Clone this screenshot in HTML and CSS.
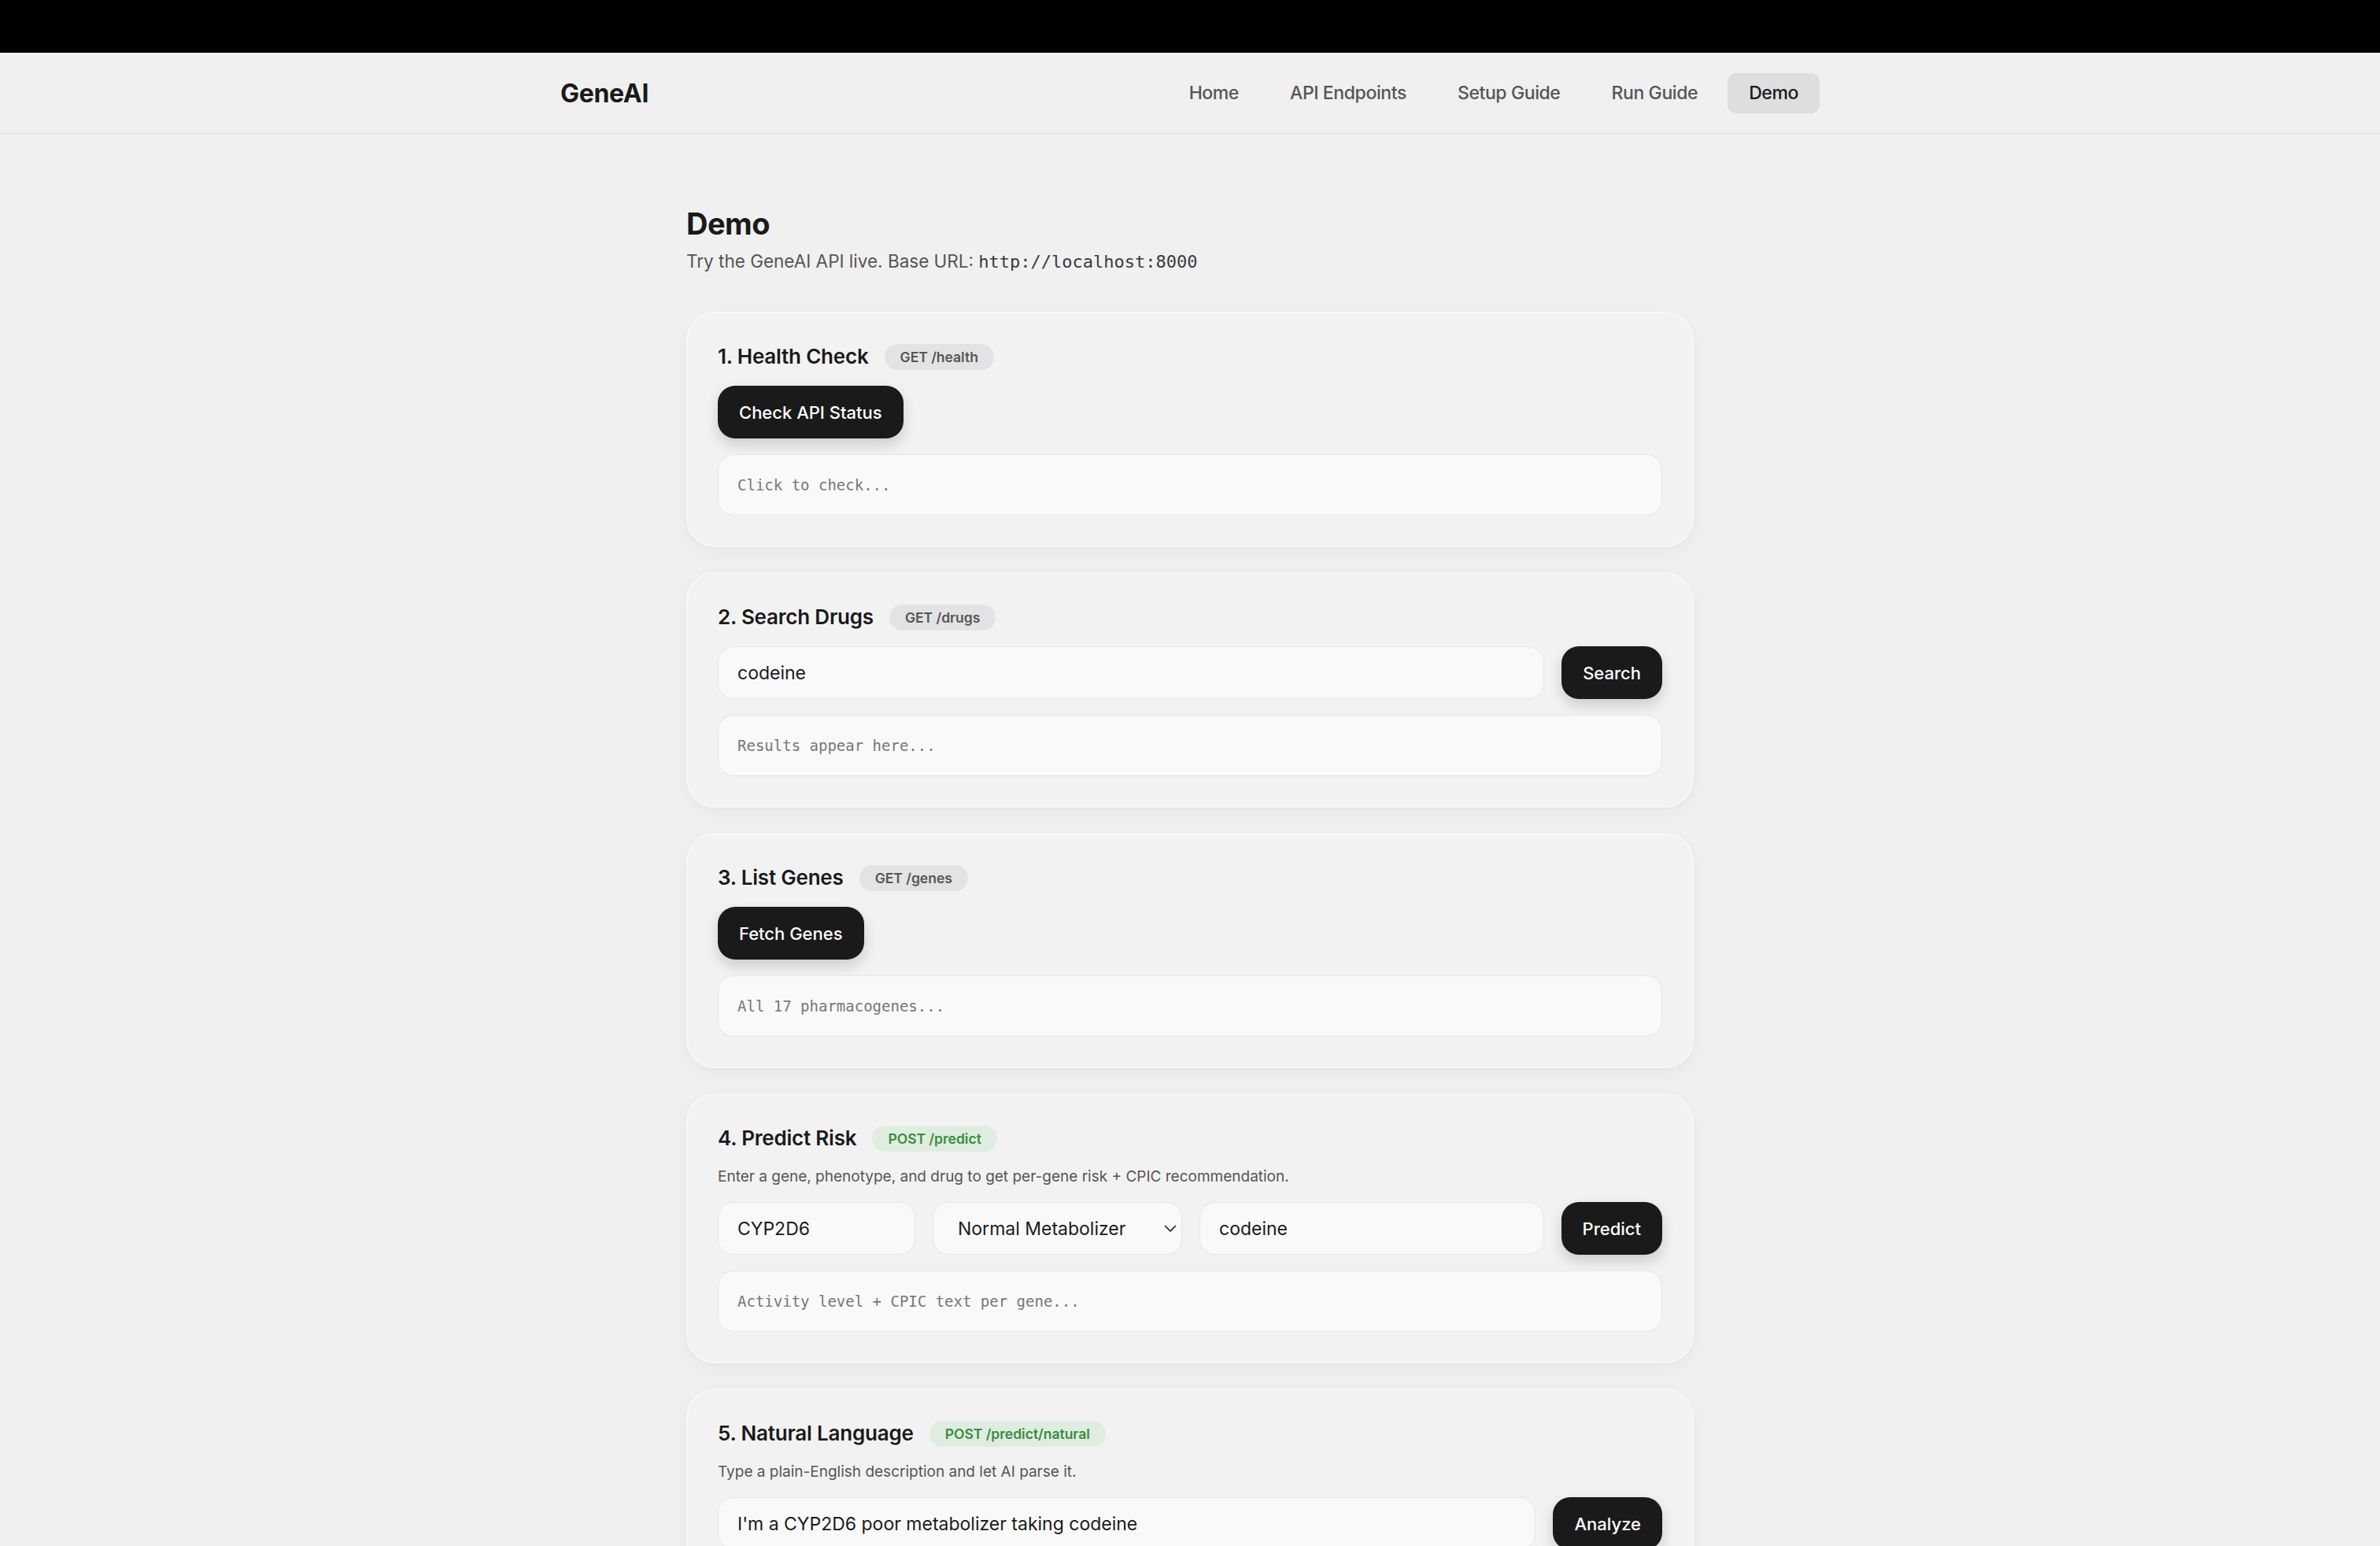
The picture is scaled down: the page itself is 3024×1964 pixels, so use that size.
FILE: index.html
```html
<!DOCTYPE html>
<html lang="en">
<head>
<meta charset="utf-8">
<title>GeneAI — Demo</title>
<link rel="stylesheet" href="styles.css">
</head>
<body>
<div class="topbar"></div>
<header class="site-header">
  <div class="header-inner">
    <a class="logo" href="#">GeneAI</a>
    <nav class="nav">
      <a class="nav-link" href="#">Home</a>
      <a class="nav-link" href="#">API Endpoints</a>
      <a class="nav-link" href="#">Setup Guide</a>
      <a class="nav-link" href="#">Run Guide</a>
      <a class="nav-link active" href="#">Demo</a>
    </nav>
  </div>
</header>
<main class="main">
  <h1 class="page-title">Demo</h1>
  <p class="page-sub">Try the GeneAI API live. Base URL: <code class="code">http://localhost:8000</code></p>

  <div class="cards">
    <section class="card">
      <div class="card-head"><h2 class="card-title">1. Health Check</h2><span class="badge">GET /health</span></div>
      <div class="row"><button class="btn">Check API Status</button></div>
      <pre class="output">Click to check...</pre>
    </section>

    <section class="card">
      <div class="card-head"><h2 class="card-title">2. Search Drugs</h2><span class="badge">GET /drugs</span></div>
      <div class="row">
        <input class="field grow" type="text" value="codeine">
        <button class="btn">Search</button>
      </div>
      <pre class="output">Results appear here...</pre>
    </section>

    <section class="card">
      <div class="card-head"><h2 class="card-title">3. List Genes</h2><span class="badge">GET /genes</span></div>
      <div class="row"><button class="btn">Fetch Genes</button></div>
      <pre class="output">All 17 pharmacogenes...</pre>
    </section>

    <section class="card">
      <div class="card-head"><h2 class="card-title">4. Predict Risk</h2><span class="badge post">POST /predict</span></div>
      <p class="card-desc">Enter a gene, phenotype, and drug to get per-gene risk + CPIC recommendation.</p>
      <div class="row">
        <input class="field gene" type="text" value="CYP2D6">
        <div class="select-wrap">
          <select class="field select">
            <option>Normal Metabolizer</option>
            <option>Poor Metabolizer</option>
            <option>Intermediate Metabolizer</option>
            <option>Ultrarapid Metabolizer</option>
          </select>
          <svg class="chevron" viewBox="0 0 16 10" width="16" height="10" aria-hidden="true"><path d="M1.5 1.5 L8 8 L14.5 1.5" fill="none" stroke="#1a1a1a" stroke-width="1.6" stroke-linecap="round" stroke-linejoin="round"/></svg>
        </div>
        <input class="field grow" type="text" value="codeine">
        <button class="btn">Predict</button>
      </div>
      <pre class="output">Activity level + CPIC text per gene...</pre>
    </section>

    <section class="card">
      <div class="card-head"><h2 class="card-title">5. Natural Language</h2><span class="badge post">POST /predict/natural</span></div>
      <p class="card-desc">Type a plain-English description and let AI parse it.</p>
      <div class="row">
        <input class="field grow" type="text" value="I'm a CYP2D6 poor metabolizer taking codeine">
        <button class="btn">Analyze</button>
      </div>
      <pre class="output">Parsed genes, phenotypes and risk...</pre>
    </section>
  </div>
</main>
</body>
</html>
```

FILE: styles.css
```css
* { box-sizing: border-box; }

html, body {
  margin: 0;
  padding: 0;
  background: #f0f0f0;
  color: #1a1a1a;
  font-family: Inter, "Noto Sans", "Liberation Sans", sans-serif;
}

.topbar {
  height: 67px;
  background: #000;
}

.site-header {
  height: 103px;
  border-bottom: 1px solid #e0e0e0;
  background: #f0f0f0;
}

.header-inner {
  max-width: 1600px;
  height: 102px;
  margin: 0 auto;
  display: flex;
  align-items: center;
  justify-content: space-between;
}

.logo {
  font-size: 32px;
  font-weight: 700;
  color: #1a1a1a;
  text-decoration: none;
  letter-spacing: -0.3px;
}

.nav {
  display: flex;
  align-items: center;
  gap: 11px;
}

.nav-link {
  display: block;
  height: 51px;
  line-height: 51px;
  padding: 0 27px;
  border-radius: 11px;
  font-size: 23px;
  font-weight: 500;
  letter-spacing: -0.4px;
  color: #555;
  text-decoration: none;
}

.nav-link.active {
  background: #dedede;
  color: #1a1a1a;
}

.main {
  width: 1280px;
  margin: 0 auto;
  padding-top: 92px;
  padding-bottom: 80px;
}

.page-title {
  margin: 0;
  font-size: 38px;
  line-height: 44px;
  font-weight: 700;
  letter-spacing: -0.5px;
}

.page-sub {
  margin: 8px 0 0;
  font-size: 22.5px;
  line-height: 36px;
  color: #555;
}

.code {
  font-family: "DejaVu Sans Mono", "Liberation Mono", monospace;
  font-size: 22px;
  color: #3a3a3a;
}

.cards {
  margin-top: 45px;
  display: flex;
  flex-direction: column;
  gap: 32px;
}

.card {
  background: #f2f2f2;
  border: 2px solid #f7f7f7;
  border-radius: 36px;
  padding: 38px;
  display: flex;
  flex-direction: column;
  gap: 20px;
  box-shadow: 0 6px 24px rgba(0, 0, 0, 0.045), 0 1px 3px rgba(0, 0, 0, 0.03);
}

.card-head {
  display: flex;
  align-items: center;
  gap: 20px;
  height: 34px;
}

.card-title {
  margin: 0;
  font-size: 26px;
  line-height: 34px;
  font-weight: 600;
  letter-spacing: -0.2px;
}

.badge {
  display: inline-block;
  height: 33px;
  line-height: 33px;
  padding: 0 20px;
  border-radius: 999px;
  background: #e3e3e3;
  color: #555;
  font-size: 17.5px;
  font-weight: 600;
}

.badge.post {
  background: #deede0;
  color: #3b8a40;
}

.card-desc {
  margin: 0;
  font-size: 19px;
  line-height: 24px;
  color: #555;
}

.row {
  display: flex;
  align-items: center;
  gap: 22px;
}

.btn {
  flex: none;
  height: 67px;
  padding: 0 27px;
  border: none;
  border-radius: 22px;
  background: #1a1a1a;
  color: #fff;
  font-family: inherit;
  font-size: 22px;
  font-weight: 500;
  box-shadow: 0 8px 18px rgba(0, 0, 0, 0.16);
  cursor: pointer;
}

.field {
  height: 67px;
  padding: 0 24px;
  border: 1px solid #e6e6e6;
  border-radius: 20px;
  background: #f9f9f9;
  color: #1a1a1a;
  font-family: inherit;
  font-size: 23px;
  outline: none;
}

.grow {
  flex: 1;
  min-width: 0;
}

.gene {
  flex: none;
  width: 251px;
}

.select-wrap {
  position: relative;
  flex: none;
  width: 317px;
}

.select {
  width: 100%;
  padding-left: 31px;
  padding-right: 40px;
  appearance: none;
  -webkit-appearance: none;
}

.chevron {
  position: absolute;
  right: 7px;
  top: 29px;
  width: 16px;
  height: 10px;
  pointer-events: none;
}

.output {
  margin: 0;
  padding: 24px 24px;
  border: 1px solid #e6e6e6;
  border-radius: 20px;
  background: #f9f9f9;
  color: #777;
  font-family: "DejaVu Sans Mono", "Liberation Mono", monospace;
  font-size: 19px;
  line-height: 28px;
  white-space: pre-wrap;
}
```
